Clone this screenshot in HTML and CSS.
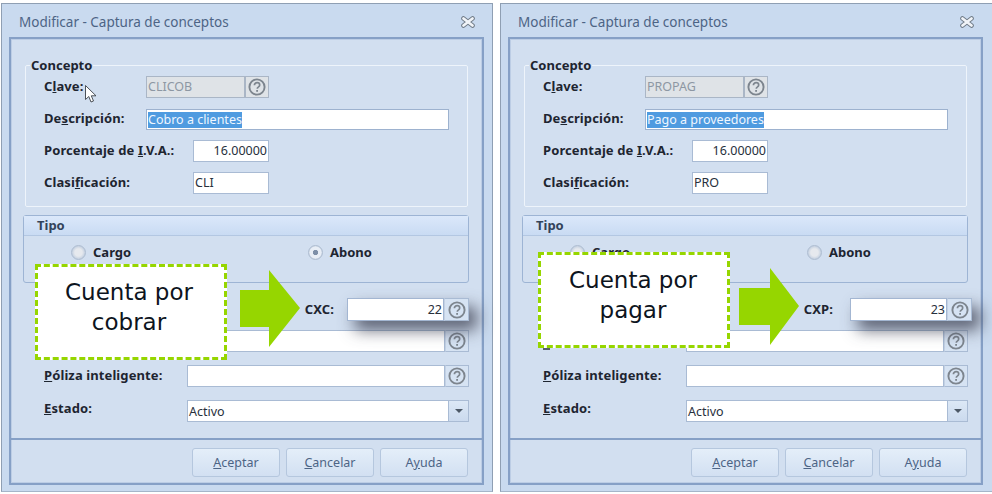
FILE: index.html
```html
<!DOCTYPE html>
<html lang="es">
<head>
<meta charset="utf-8">
<title>Modificar - Captura de conceptos</title>
<link rel="stylesheet" href="styles.css">
</head>
<body>
<svg class="defs" width="0" height="0" aria-hidden="true">
  <symbol id="help" viewBox="0 0 18 18">
    <circle cx="9" cy="9" r="7.6" fill="none" stroke="#7d858e" stroke-width="1.9"/>
    <path d="M6.4 7.2c0-1.6 1.2-2.5 2.7-2.5s2.6.9 2.6 2.2c0 1.100-.7 1.600-1.500 2.200-.6.4-.9.8-.9 1.600" fill="none" stroke="#7d858e" stroke-width="1.700"/>
    <rect x="8.200" y="12" width="1.800" height="1.800" fill="#7d858e"/>
  </symbol>
  <symbol id="close" viewBox="0 0 14 12">
    <path d="M2.500 2.500 11.500 9.500M11.500 2.500 2.500 9.500" stroke="#6f7a86" stroke-width="4.600" stroke-linecap="round"/>
    <path d="M2.500 2.500 11.500 9.500M11.500 2.500 2.500 9.500" stroke="#f1f4f8" stroke-width="2.800" stroke-linecap="round"/>
  </symbol>
</svg>
<main class="desktop">

  <section class="window">
    <header class="titlebar"><span>Modificar - Captura de conceptos</span><svg class="close"><use href="#close"/></svg></header>
    <div class="panel">
      <div class="panel-body">
        <div class="group">
          <div class="legend">Concepto</div>
          <div class="row"><span class="label w-sm">C<u>l</u>ave:</span><div class="field field-off w-clave">CLICOB</div><div class="help help-off"><svg><use href="#help"/></svg></div></div>
          <div class="row row-end"><span class="label w-sm">De<u>s</u>cripción:</span><div class="field w-desc"><span class="sel">Cobro a clientes</span></div></div>
          <div class="row"><span class="label w-lg">Porcentaje de <u>I</u>.V.A.:</span><div class="field right w-short">16.00000</div></div>
          <div class="row"><span class="label w-lg">Clasi<u>f</u>icación:</span><div class="field w-short">CLI</div></div>
        </div>
        <div class="tipo">
          <div class="tipo-head">Tipo</div>
          <div class="tipo-body">
            <div class="radio-item"><span class="radio"></span>Cargo</div>
            <div class="radio-item"><span class="radio radio-on"></span>Abono</div>
          </div>
        </div>
        <div class="row row-account">
          <span class="label account-label">CXC:</span>
          <div class="account"><div class="field right w-account">22</div><div class="help"><svg><use href="#help"/></svg></div></div>
        </div>
        <div class="row row-wide row-second"><span class="label w-side"></span><div class="field w-wide"></div><div class="help"><svg><use href="#help"/></svg></div></div>
        <div class="row row-wide"><span class="label w-side"><u>P</u>óliza inteligente:</span><div class="field w-wide"></div><div class="help"><svg><use href="#help"/></svg></div></div>
        <div class="row row-wide"><span class="label w-side label-up"><u>E</u>stado:</span><div class="field w-combo">Activo</div><div class="combo-btn"><i></i></div></div>
      </div>
      <footer class="panel-foot">
        <div class="btn"><u>A</u>ceptar</div><div class="btn"><u>C</u>ancelar</div><div class="btn">A<u>y</u>uda</div>
      </footer>
    </div>
    <div class="callout callout-a">Cuenta por<br>cobrar</div>
    <svg class="arrow arrow-a" viewBox="0 0 60 77"><path d="M0 20H29V0L60 38 29 77V57H0Z"/></svg>
    <svg class="cursor" viewBox="0 0 12 18"><path d="M.5.5V14.500L3.800 11.500 6 17 8.500 16 6.300 10.800H11Z" fill="#fff" stroke="#3a3f46" stroke-width=".9"/></svg>
  </section>

  <section class="window window-cut">
    <header class="titlebar"><span>Modificar - Captura de conceptos</span><svg class="close"><use href="#close"/></svg></header>
    <div class="panel">
      <div class="panel-body">
        <div class="group">
          <div class="legend">Concepto</div>
          <div class="row"><span class="label w-sm">C<u>l</u>ave:</span><div class="field field-off w-clave">PROPAG</div><div class="help help-off"><svg><use href="#help"/></svg></div></div>
          <div class="row row-end"><span class="label w-sm">De<u>s</u>cripción:</span><div class="field w-desc"><span class="sel">Pago a proveedores</span></div></div>
          <div class="row"><span class="label w-lg">Porcentaje de <u>I</u>.V.A.:</span><div class="field right w-short">16.00000</div></div>
          <div class="row"><span class="label w-lg">Clasi<u>f</u>icación:</span><div class="field w-short">PRO</div></div>
        </div>
        <div class="tipo">
          <div class="tipo-head">Tipo</div>
          <div class="tipo-body">
            <div class="radio-item"><span class="radio"></span>Cargo</div>
            <div class="radio-item"><span class="radio"></span>Abono</div>
          </div>
        </div>
        <div class="row row-account row-account-pay">
          <span class="label account-label">CXP:</span>
          <div class="account"><div class="field right w-account">23</div><div class="help"><svg><use href="#help"/></svg></div></div>
        </div>
        <div class="row row-wide row-second"><span class="label w-side"><i class="stub"></i></span><div class="field w-wide"></div><div class="help"><svg><use href="#help"/></svg></div></div>
        <div class="row row-wide"><span class="label w-side"><u>P</u>óliza inteligente:</span><div class="field w-wide"></div><div class="help"><svg><use href="#help"/></svg></div></div>
        <div class="row row-wide"><span class="label w-side label-up"><u>E</u>stado:</span><div class="field w-combo">Activo</div><div class="combo-btn"><i></i></div></div>
      </div>
      <footer class="panel-foot">
        <div class="btn"><u>A</u>ceptar</div><div class="btn"><u>C</u>ancelar</div><div class="btn">A<u>y</u>uda</div>
      </footer>
    </div>
    <div class="callout callout-b">Cuenta por<br>pagar</div>
    <svg class="arrow arrow-b" viewBox="0 0 60 77"><path d="M0 20H31V0L60 38 31 77V57H0Z"/></svg>
  </section>

</main>
</body>
</html>
```

FILE: styles.css
```css
* { box-sizing: border-box; }
html, body { margin: 0; background: #fff; }
body { width: 992px; height: 494px; overflow: hidden; font-family: "Noto Sans", "DejaVu Sans", sans-serif; font-size: 13px; color: #1e2530; }
.defs { position: absolute; }
.desktop { display: flex; gap: 7px; padding: 3px 0 0 1px; }

.window { position: relative; flex: none; width: 492px; height: 489px; padding: 0 8px 6px 7px; display: flex; flex-direction: column; background: #c9daef; border: 1px solid #8f9fb3; border-bottom-color: #a5b5c9; }
.window-cut { border-right: 0; padding-right: 9px; }
.titlebar { flex: none; height: 33px; display: flex; align-items: center; justify-content: space-between; padding: 3px 9px 0 10px; color: #4d6485; font-size: 13.5px; }
.close { width: 14px; height: 12px; }

.panel { flex: 1; display: flex; flex-direction: column; background: #d2dff0; border: 2px solid #86a0c6; box-shadow: inset 0 0 0 1px #bccde5; }
.panel-body { height: 399px; flex: none; padding: 26px 0 0 12px; }
.panel-foot { flex: 1; display: flex; gap: 6px; padding: 8px 0 0 181px; border-top: 2px solid #86a0c6; }

.group { width: 443px; height: 142px; margin-left: 2px; padding: 0 0 0 18px; display: flex; flex-direction: column; gap: 10px; border: 1px solid #eef4fb; border-radius: 2px; }
.legend { width: fit-content; margin: -10px 0 -8px -14px; padding: 0 1px; height: 18px; line-height: 18px; font-size: 13px; font-weight: 700; background: #d2dff0; }

.row { display: flex; height: 22px; align-items: center; flex: none; }
.row-end { align-items: flex-end; }
.label { flex: none; font-weight: 700; white-space: nowrap; letter-spacing: .1px; margin-bottom: 2px; align-self: center; }
.label u { text-underline-offset: 1px; }
.w-sm { width: 102px; }
.w-lg { width: 149px; }
.w-side { width: 164px; padding-left: 21px; }
.label-up { align-self: flex-start; margin: -1px 0 0; }

.field { flex: none; height: 22px; line-height: 20px; padding: 0 1px; font-size: 12.5px; white-space: nowrap; background: #fff; border: 1px solid #a9bbd4; color: #27303c; }
.right { text-align: right; }
.field-off { background: #dfe3e7; border-color: #aab6c6; color: #8d97a3; }
.w-clave { width: 99px; }
.w-desc { width: 303px; height: 21px; line-height: 19px; border-color: #9db2cf; }
.w-short { width: 76px; }
.w-account { width: 97px; height: 23px; line-height: 21px; border-color: #a3b6d2; }
.w-wide { width: 258px; }
.w-combo { width: 262px; line-height: 21px; }
.sel { display: inline-block; height: 16px; line-height: 15px; background: #4f9be0; color: #eef6ff; }

.help { flex: none; width: 24px; height: 22px; display: flex; align-items: center; justify-content: center; background: #d6e3f3; border: 1px solid #a9bbd4; border-left: 1px solid #c3d1e4; }
.help svg { width: 18px; height: 18px; }
.help-off { background: #dfe3e7; border-color: #aab6c6; }
.combo-btn { flex: none; width: 20px; height: 22px; display: flex; align-items: center; justify-content: center; background: linear-gradient(#dce8f6, #cbdaee); border: 1px solid #a9bbd4; border-left: 0; }
.combo-btn i { border: 4px solid transparent; border-top: 4px solid #4c5866; border-bottom: 0; }

.tipo { width: 446px; height: 68px; margin-top: 8px; border: 1px solid #9db4d4; border-radius: 3px; }
.tipo-head { height: 20px; line-height: 19px; padding-left: 13px; font-weight: 700; color: #33435a; background: linear-gradient(#dbe8fa, #c9dbf3); border-bottom: 1px solid #b3c7e2; }
.tipo-body { display: grid; grid-template-columns: 237px 1fr; padding: 6px 0 0 47px; }
.radio-item { height: 20px; display: flex; align-items: center; gap: 7px; font-weight: 700; }
.radio { width: 15px; height: 15px; flex: none; border-radius: 50%; background: radial-gradient(circle, #e6e9ee 0 40%, #c5d1e1 70%); border: 1px solid #aebdd1; }
.radio-on { background: radial-gradient(circle, #7d8fa8 0 26%, #e8eef6 32% 60%, #c5d1e1 75%); }

.row-account { height: 23px; width: 446px; margin-top: 15px; justify-content: flex-end; position: relative; z-index: 1; }
.row-account-pay { width: 450px; }
.account-label { margin-right: 13px; }
.row-account-pay .account-label { margin-right: 17px; }
.account { display: flex; box-shadow: 8px 9px 16px 0 rgba(62, 66, 84, .8); }
.account .help { height: 23px; width: 25px; }
.row-wide { margin-top: 13px; }
.row-second { margin-top: 9px; }
.stub { display: block; width: 7px; height: 2px; margin: 17px 0 0; background: #56606c; }

.btn { width: 88px; height: 29px; line-height: 27px; text-align: center; font-size: 12.5px; color: #4d6485; background: linear-gradient(#e4eef9, #d2e0f2); border: 1px solid #b5c7de; border-radius: 3px; }

.callout { position: absolute; width: 192px; height: 96px; padding: 10px 4px 0 0; background: #fff; border: 3px dashed #96d600; font-family: "DejaVu Sans", sans-serif; font-size: 23px; line-height: 30px; text-align: center; color: #0d1420; z-index: 3; }
.callout-a { left: 33px; top: 260px; }
.callout-b { left: 37px; top: 248px; padding-right: 2px; }
.arrow { position: absolute; width: 60px; height: 77px; z-index: 2; }
.arrow path { fill: #96d600; }
.arrow-a { left: 238px; top: 266px; }
.arrow-b { left: 238px; top: 264px; }
.cursor { position: absolute; left: 83px; top: 81px; width: 12px; height: 18px; z-index: 4; }
```
